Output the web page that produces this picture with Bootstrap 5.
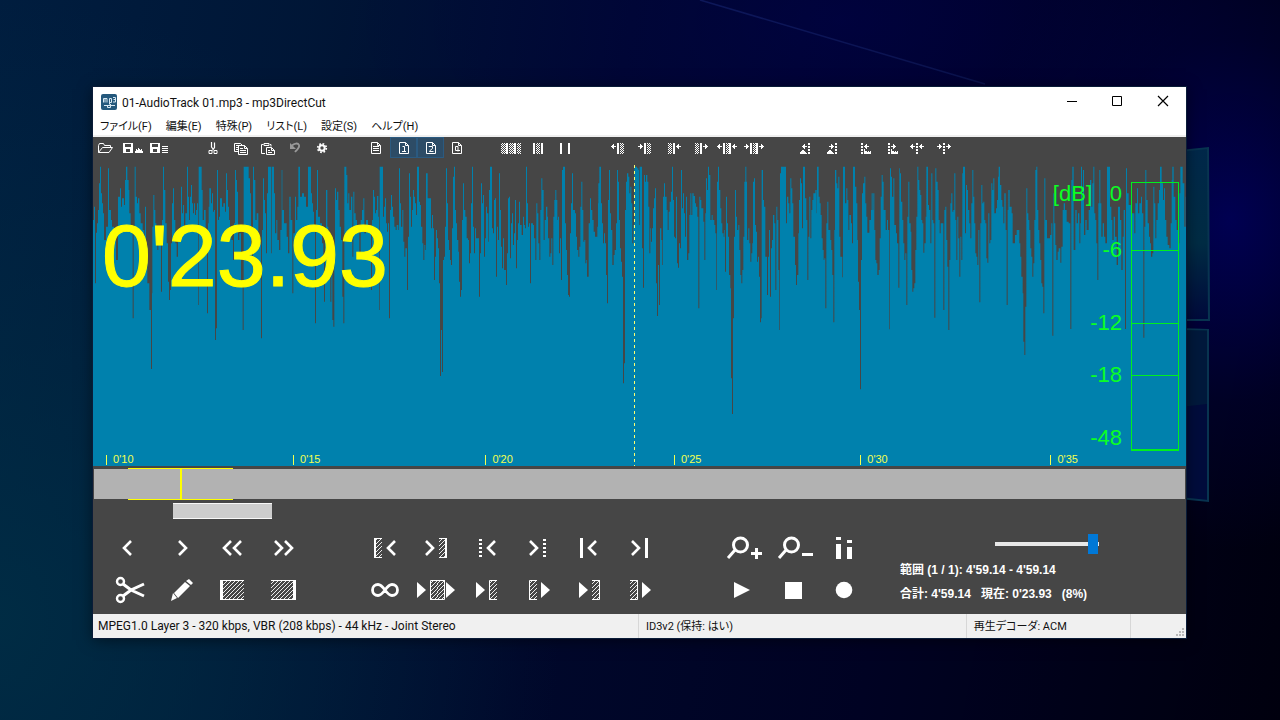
<!DOCTYPE html>
<html lang="ja">
<head>
<meta charset="utf-8">
<meta name="viewport" content="width=device-width, initial-scale=1">
<title>01-AudioTrack 01.mp3 - mp3DirectCut</title>
<link href="https://cdn.jsdelivr.net/npm/bootstrap@5.3.0/dist/css/bootstrap.min.css" rel="stylesheet">
<style>
body{font-family:Roboto,"Noto Sans CJK JP",sans-serif;font-size:12px;line-height:16px;color:#111;background:#000a2a}
.desktop{padding:87px 94px 82px 93px;overflow:hidden;
 background:
 radial-gradient(ellipse 260px 330px at 1230px 220px,rgba(0,0,92,.85),rgba(0,0,70,.35) 55%,transparent),
 radial-gradient(ellipse 500px 260px at 840px 20px,rgba(0,0,84,.5),transparent),
 radial-gradient(ellipse 560px 620px at 0 620px,rgba(0,48,70,.8),transparent),
 linear-gradient(100deg,rgba(0,32,66,.9) 0,rgba(0,28,62,.75) 22%,rgba(0,12,54,.5) 45%,rgba(0,0,38,.5) 70%,#00000e 100%),#000420}
.scenery{inset:0;width:100%;height:100%}
.app-window{box-shadow:0 0 0 1px #0a1c38,0 2px 14px rgba(0,0,0,.5);background:#464646}
.title-bar{height:30px;background:#fff;padding-left:8px}
.title-bar .title-text{padding:1px 0 0 5px}
.title-bar .btn{width:46px;height:30px;border-radius:0}
.menu-bar{height:20px;background:#fff;border-bottom:2px solid #f0f0f0;font-feature-settings:"palt";font-size:11px;line-height:20px}
.menu-bar a{color:#111;text-decoration:none;padding:0 7px}
.tool-strip{height:23px}
.tool-strip .btn{width:27px;height:21px}
.tool-strip .gap-cell{width:27px}
.tool-strip .btn.active{background:#2d4c66;box-shadow:inset 0 0 0 1px #2b5a80}
.btn svg,.title-bar svg{display:block}
.wave{min-height:200px}
.wave svg.peaks{inset:0;width:100%;height:100%}
.clock{left:9px;top:45px;font:88px/102px "Liberation Sans",sans-serif;color:#ff0;-webkit-text-stroke:1px #ff0}
.cursor-line{left:49.5%;top:5px;bottom:0;width:1px;background:repeating-linear-gradient(#ffff70 0 3px,transparent 3px 6px)}
.tick{bottom:0;font:11px/13px "Liberation Sans",sans-serif;color:#f4ff50}
.tick::before{content:"";display:inline-block;width:1px;height:10px;background:#f4ff50;margin-right:6px;vertical-align:-2px}
.meter{top:22px;bottom:15px;right:7px;width:48px;border:1px solid #00f01e;border-bottom-width:2px}
.meter div+div{border-top:1px solid #00f01e}
.db{right:64px;font:22px/24px "Liberation Sans",sans-serif;color:#0bff24;transform:translateY(-50%)}
.db-unit{right:94px}
.overview{height:30px;background:#b2b2b2;margin:3px 1px 0}
.view-range{left:3.1%;width:9.6%;top:-1px;bottom:-1px;border:solid #ff0;border-width:1px 0}
.view-pos{left:7.9%;width:2px;top:-1px;bottom:-1px;background:#ff0}
.scroll-track{height:20px;padding-top:4px}
.scroll-thumb{width:99px;height:16px;margin-left:80px;background:#cdcdcd;border:solid #f8f8f8;border-width:1px 0}
.deck{padding:8px 0 3px 12px}
.deck-grid{display:grid;grid-template-columns:repeat(15,51px)}
.deck-grid .btn{width:51px;height:42px}
.info{font:bold 12px/16px "Liberation Sans","Noto Sans CJK JP",sans-serif;color:#fff;padding:7px 0 0 30px;white-space:nowrap}
.volume{appearance:none;display:block;width:104px;height:20px;margin-left:95px;background:linear-gradient(#e8e8e8,#e8e8e8) center/100% 4px no-repeat}
.volume::-webkit-slider-thumb{appearance:none;width:10px;height:20px;background:#0078d7}
.info p{margin:0}
.status{background:#f0f0f0;height:24px;line-height:25px}
.status div{border-right:1px solid #d7d7d7;white-space:nowrap;font-feature-settings:"palt"}
.status .ja{font-size:11px}
.status div:last-of-type{border:0}
</style>
</head>
<body>
<svg width="0" height="0" class="position-absolute" aria-hidden="true">
<defs>
<pattern id="dots" width="2" height="2" patternUnits="userSpaceOnUse"><path d="M0 0h1v1h-1zM1 1h1v1h-1z" fill="#fff"/></pattern>
<pattern id="hatch" width="4" height="4" patternUnits="userSpaceOnUse"><path d="M-1 5L5 -1M-1 1L1 -1M3 5L5 3" stroke="#fff" stroke-width=".9"/></pattern>
<symbol id="al" viewBox="0 0 5 5"><path d="M0 2h1v-1h1v-1h1v2h2v1h-2v2h-1v-1h-1v-1h-1z" fill="#fff"/></symbol>
<symbol id="ar" viewBox="0 0 5 5"><path d="M5 2h-1v-1h-1v-1h-1v2h-2v1h2v2h1v-1h1v-1h1z" fill="#fff"/></symbol>
<symbol id="lt" viewBox="0 0 10 16"><path d="M9 1L2 8l7 7" fill="none" stroke="#fff" stroke-width="2.6"/></symbol>
<symbol id="gt" viewBox="0 0 10 16"><path d="M1 1l7 7-7 7" fill="none" stroke="#fff" stroke-width="2.6"/></symbol>
<symbol id="tri" viewBox="0 0 9 16"><path d="M0 0l9 8-9 8z" fill="#fff"/></symbol>
<symbol id="openl" viewBox="0 0 8 20"><path d="M0 0h8v20h-8z" fill="url(#hatch)"/><path d="M8 .5H.5V19.500H8" fill="none" stroke="#fff"/></symbol>
<symbol id="openr" viewBox="0 0 8 20"><path d="M0 0h8v20h-8z" fill="url(#hatch)"/><path d="M0 .5h7.500v19H0" fill="none" stroke="#fff"/></symbol>
<symbol id="page" viewBox="0 0 10 12"><path d="M.5 .5h6l3 3v8h-9zM6.500 .5v3h3" fill="none" stroke="#fff"/></symbol>
<symbol id="floppy" viewBox="0 0 10 10"><path d="M0 0h10v10h-10zM2 1v3h6v-3zM3 6v3h4v-3z" fill="#fff" fill-rule="evenodd"/></symbol>
</defs>
</svg>

<main class="desktop position-relative min-vh-100 d-flex">
<svg class="scenery position-absolute" viewBox="0 0 1280 720" preserveAspectRatio="none" aria-hidden="true">
 <defs>
 <linearGradient id="pa" x1="0" y1="0" x2="0" y2="1"><stop offset="0" stop-color="#00284a"/><stop offset=".55" stop-color="#002c44"/><stop offset="1" stop-color="#000a3c"/></linearGradient>
 <linearGradient id="beam" x1="0" y1="0" x2="1" y2="0"><stop offset="0" stop-color="#1a2a7a" stop-opacity=".5"/><stop offset="1" stop-color="#1a2a70" stop-opacity=".4"/></linearGradient>
 </defs>
 <path d="M700 0L985 84" stroke="url(#beam)" stroke-width="1.500"/>
 <path d="M1180 151l28-3 1 172h-29z" fill="url(#pa)" stroke="#083450" stroke-width="2"/>
 <path d="M1180 329l28 1v171l-28-3z" fill="#000c3c" stroke="#083450" stroke-width="2"/>
 <path d="M1180 330h27v74l-27 3z" fill="#00203c" opacity=".7"/>
</svg>

<section class="app-window position-relative flex-grow-1 d-flex flex-column">
 <header class="title-bar d-flex align-items-center">
  <svg width="16" height="16" viewBox="0 0 16 16"><rect width="16" height="16" rx="2" fill="#24587c"/><path d="M2.500 8.500v-4h1.500v4M4 4.500h2v4M8.500 10.500v-6h2v4h-2M12 3.500h2.500v4.500H12M12.500 5.500h2M3 11.500h11M9.500 10v3.500H6.500v-2" fill="none" stroke="#d8e8f2"/></svg>
  <span class="title-text flex-grow-1">01-AudioTrack 01.mp3 - mp3DirectCut</span>
  <button class="btn p-0 border-0" aria-label="最小化"><svg width="46" height="30"><path d="M19 14.500h10" stroke="#000"/></svg></button>
  <button class="btn p-0 border-0" aria-label="最大化"><svg width="46" height="30"><path d="M18.500 9.500h9v9h-9z" fill="none" stroke="#000"/></svg></button>
  <button class="btn p-0 border-0" aria-label="閉じる"><svg width="46" height="30"><path d="M18 9l10 10M28 9l-10 10" stroke="#000" stroke-width="1.200"/></svg></button>
 </header>
 <nav class="menu-bar d-flex">
  <a href="#">ファイル(F)</a><a href="#">編集(E)</a><a href="#">特殊(P)</a><a href="#">リスト(L)</a><a href="#">設定(S)</a><a href="#">ヘルプ(H)</a>
 </nav>
 <div class="tool-strip d-flex" role="toolbar" id="tools"></div>

 <div class="wave position-relative flex-grow-1">
  <svg class="peaks position-absolute" viewBox="0 0 3279 918" preserveAspectRatio="none" aria-hidden="true"><path id="peaks" fill="#0081ad"/></svg>
  <div class="cursor-line position-absolute"></div>
  <div class="clock position-absolute">0'23.93</div>
  <span class="tick position-absolute" style="left:1.2%">0'10</span>
  <span class="tick position-absolute" style="left:18.3%">0'15</span>
  <span class="tick position-absolute" style="left:35.9%">0'20</span>
  <span class="tick position-absolute" style="left:53.150%">0'25</span>
  <span class="tick position-absolute" style="left:70.2%">0'30</span>
  <span class="tick position-absolute" style="left:87.6%">0'35</span>
  <span class="db db-unit position-absolute" style="top:11.2%">[dB]</span>
  <span class="db position-absolute" style="top:11.2%">0</span>
  <span class="db position-absolute" style="top:29.5%">-6</span>
  <span class="db position-absolute" style="top:53.4%">-12</span>
  <span class="db position-absolute" style="top:70.4%">-18</span>
  <span class="db position-absolute" style="top:91%">-48</span>
  <div class="meter position-absolute d-flex flex-column"><div style="flex:68 0 0"></div><div style="flex:73 0 0"></div><div style="flex:51 0 0"></div><div style="flex:74 0 0"></div></div>
 </div>

 <div class="overview position-relative"><div class="view-range position-absolute"></div><div class="view-pos position-absolute"></div></div>
 <div class="scroll-track"><div class="scroll-thumb"></div></div>

 <div class="deck d-flex">
  <div class="deck-grid" id="deck"></div>
  <div class="info">
   <input class="volume" type="range" min="0" max="100" value="99" aria-label="音量">
   <p class="mt-2">範囲 (1 / 1): 4'59.14 - 4'59.14</p>
   <p class="mt-2" style="white-space:pre">合計: 4'59.14   現在: 0'23.93   (8%)</p>
  </div>
 </div>

 <footer class="status d-flex position-relative">
  <div style="width:49.950%;padding-left:5px">MPEG1.0 Layer 3 - 320 kbps, VBR (208 kbps) - 44 kHz - Joint Stereo</div>
  <div class="ja" style="width:30%;padding-left:7px">ID3v2 (保持: はい)</div>
  <div class="ja" style="width:15%;padding-left:7px">再生デコーダ: ACM</div>
  <div class="flex-grow-1"></div>
  <svg class="position-absolute bottom-0 end-0" width="12" height="12" aria-hidden="true"><path d="M8 2h2v2h-2zM5 5h2v2h-2zM8 5h2v2h-2zM2 8h2v2h-2zM5 8h2v2h-2zM8 8h2v2h-2z" fill="#b8b8b8"/></svg>
 </footer>
</section>
</main>

<script src="https://cdn.jsdelivr.net/npm/bootstrap@5.3.0/dist/js/bootstrap.bundle.min.js"></script>
<script>
// Small drawing helpers shared by the toolbar and the transport icons
const bar = (x, y = 6, h = 11, w = 2) => `<rect x="${x}" y="${y}" width="${w}" height="${h}" fill="#fff"/>`;
const dots = (x, w) => `<rect x="${x}" y="6" width="${w}" height="11" fill="url(#dots)" shape-rendering="crispEdges"/>`;
const use = (id, x, y, w, h) => `<use href="#${id}" x="${x}" y="${y}" width="${w}" height="${h}"/>`;
const arrow = (id, x) => use(id, x, 7, 5, 5);
const dotBar = x => [6, 9, 12, 15].map(y => bar(x, y, 2)).join('');
const line = (d, c = '#fff', w = 1) => `<path d="${d}" fill="none" stroke="${c}" stroke-width="${w}"/>`;
const solid = (d, c = '#fff') => `<path d="${d}" fill="${c}" fill-rule="evenodd"/>`;
const hillL = solid('M5 17v-2h1v-1h1v-1h2v1h1v1h1v1h1v1z');
const hillR = solid('M15 17v-5h1v2h2v1h1v-1h1v1h1v-1h1v3z');

const tools = [
 ['開く', line('M5.5 15.500V8.500l1-2h4l1 2h6v2M5.500 15.500l4-5h10l-3.500 5z')],
 ['保存', use('floppy',3,6,10,10) + solid('M15 16v-2h1v-2h1v1h1v-2h1v1h1v1h1v-1h1v2h1v2z')],
 ['名前を付けて保存', use('floppy',3,6,10,10) + line('M15 9.500h6M15 11.500h6M15 13.500h6M15 15.500h6')],
 null,
 ['切り取り', line('M10.500 5v5l2 2.500M13.500 5.500v5l-2 3','#fff',1.200) + line('M8 13.500h3v3h-3zM13 13.500h3v3h-3z')],
 ['コピー', line('M10 14.500H6.500V6.500h6l2 2M8 8.500h3M8 10.500h2M8 12.500h2M10.500 8.500h6l3 3v6h-9zM16.500 8.500v3h3M12 11.500h3M12 13.500h6M12 15.500h6')],
 ['貼り付け', line('M10 16.500H6.500v-9h2M15 7.500h1v2M9 6.500h5v2H9zM11.500 10.500h5l3 3v4h-8zM16.500 10.500v3h3M13 13.500h2M13 15.500h4')],
 ['元に戻す', line('M10 8.500c2-2 6-3 7-.5c1 2.500-1.500 4-4 7','#999',1.800) + solid('M8 6v6h6z','#999')],
 ['設定', `<circle cx="13" cy="11" r="2.700" fill="none" stroke="#fff" stroke-width="2"/><circle cx="13" cy="11" r="4.300" fill="none" stroke="#fff" stroke-width="1.700" stroke-dasharray="1.700 1.680"/>`],
 null,
 ['文書', use('page',8,5,10,12) + line('M10 9.500h6M10 11.500h6M10 13.500h6')],
 ['ページ 1', use('page',9,5,10,12) + line('M12.500 9.500h2v5M12 14.500h4'), 1],
 ['ページ 2', use('page',9,5,10,12) + line('M12 10v-.5h3.500v2l-3 2.500v.5h4'), 1],
 ['ページ a', use('page',8,5,10,12) + line('M14 14.500v-5h-2.500v4h4.500')],
 null,
 ['範囲 1', dots(3,5)+bar(8)+dots(11,5)+bar(16)+dots(19,4)],
 ['範囲 2', bar(8)+dots(11,4)+bar(16)],
 ['範囲 3', bar(8)+bar(16)],
 null,
 ['始点を左へ', arrow('al',5)+bar(11)+dots(14,4)],
 ['始点を右へ', arrow('ar',5)+bar(11)+dots(14,4)],
 ['終点を左へ', dots(8,4)+bar(13)+arrow('al',16)],
 ['終点を右へ', dots(8,4)+bar(13)+arrow('ar',16)],
 ['範囲を左へ', arrow('al',3)+bar(9)+dots(12,3)+bar(15)+arrow('al',18)],
 ['範囲を右へ', arrow('ar',3)+bar(9)+dots(12,3)+bar(15)+arrow('ar',18)],
 null,
 ['前を検出', arrow('al',7)+dotBar(13)+hillL],
 ['後を検出', arrow('ar',7)+dotBar(13)+hillL],
 ['前の無音', dotBar(12)+arrow('al',15)+hillR],
 ['後の無音', dotBar(12)+arrow('ar',15)+hillR],
 ['境界を左へ', arrow('al',7)+dotBar(13)+arrow('al',16)],
 ['境界を右へ', arrow('ar',7)+dotBar(13)+arrow('ar',16)]
];
document.getElementById('tools').innerHTML = tools.map(t => t
 ? `<button class="btn p-0 border-0 rounded-0${t[2] ? ' active' : ''}" aria-label="${t[0]}"><svg width="27" height="21">${t[1]}</svg></button>`
 : '<span class="gap-cell"></span>').join('');

const lt = x => use('lt', x, 13, 10, 16), gt = x => use('gt', x, 13, 10, 16), tri = x => use('tri', x, 13, 9, 16);
const ol = x => use('openl', x, 11, 8, 20), or = x => use('openr', x, 11, 8, 20);
const dashes = x => [0,1,2,3,4].map(i => bar(x, 12 + i * 4, 2, 3)).join('');
const lens = '<circle cx="23.500" cy="18" r="7" fill="none" stroke="#fff" stroke-width="3"/><path d="M18 23l-7 8" stroke="#fff" stroke-width="3"/>';
const hatchBox = '<rect x="13" y="11" width="24" height="20" fill="url(#hatch)"/>';
const deck = [
 ['戻る', lt(17)], ['進む', gt(22)], ['大きく戻る', lt(15)+lt(25)], ['大きく進む', gt(16)+gt(26)], null,
 ['始点へ', ol(14)+bar(14,11,20)+lt(26)], ['終点へ', gt(14)+or(28)+bar(34,11,20)], ['前の境界', dashes(17)+lt(24)], ['次の境界', gt(16)+dashes(30)],
 ['先頭', bar(16,11,20,3)+lt(23)], ['末尾', gt(16)+bar(30,11,20,3)], null,
 ['拡大', lens+line('M34 26.500h11M39.500 21v11','#fff',3)], ['縮小', lens+line('M34 27.500h11','#fff',3)],
 ['レベル', solid('M17 10h5v3h-5zM17 17h5v15h-5zM28 13h5v3h-5zM28 20h5v12h-5z')],
 ['カット', '<circle cx="15.500" cy="12.500" r="3.500" fill="none" stroke="#fff" stroke-width="2.400"/><circle cx="15.500" cy="29.500" r="3.500" fill="none" stroke="#fff" stroke-width="2.400"/>'+line('M18 15l8 6 13 6M18 27l8-6 13-6','#fff',3)],
 ['編集', solid('M15 32l2-8 4 5zM18 24L29 13l5 4L22 29zM30 12l3-2 4 4-2 2z')],
 ['始点を設定', hatchBox+bar(13,11,20,3)+line('M13 11.500h24M13 30.500h24')],
 ['終点を設定', hatchBox+bar(35,11,20,3)+line('M13 11.500h25M13 30.500h25')], null,
 ['ループ', line('M25 21C22.500 17.500 21 15.500 18 15.500a5.500 5.500 0 0 0 0 11C21 26.500 22.500 24.500 25 21S29 15.500 32 15.500a5.500 5.500 0 0 1 0 11C29 26.500 27.500 24.500 25 21z','#fff',2.800)],
 ['範囲を再生', tri(6)+ol(19)+or(26)+tri(35)],
 ['始点まで再生', tri(14)+ol(27)], ['始点から再生', ol(16)+tri(28)],
 ['終点まで再生', tri(15)+or(28)], ['終点から再生', or(15)+tri(27)], null,
 ['再生', solid('M17 13l16 8-16 8z')], ['停止', bar(17,13,17,17)], ['録音', '<circle cx="25" cy="21" r="8.300" fill="#fff"/>']
];
document.getElementById('deck').innerHTML = deck.map(t => t
 ? `<button class="btn p-0 border-0" aria-label="${t[0]}"><svg width="51" height="42">${t[1]}</svg></button>` : '<span></span>').join('');

// Peak levels: [horizontal origin, "x level x level ..."], each level holding until the next x
const peakData = [
[-9,"9 180 12 140 15 370 18 218 21 190 24 150 27 70 30 20 33 100 36 130 39 160 42 240 48 200 54 25 57 150 63 180 66 200 72 240 78 300 84 110 90 85 93 140 96 115 102 135 105 60 108 20 112 60 116 90 118 160 122 200 128 475 131 220 134 20 137 110 141 130 144 115 148 160 152 190 158 210 163 235 165 140 168 260 172 370 178 450 183 627 186 400 187 200 190 105 193 150 196 190 199 240 202 270 205 240 210 200 213 395 216 180 219 20 222 90 226 190 230 250 234 365 237 420 240 390 243 250 246 130 249 85 252 180 256 250 260 290 264 240 270 200 273 80 276 160 279 135 282 200 286 160 291 20 294 110 297 180 300 110 303 75 306 130 309 160 312 130 315 165 318 150 321 130 324 435 326 20 335 90 338 180 342 150 347 240 351 460 354 190 356 140 358 85 363 130 366 100 369 155 372 150 375 540 378 505 381 30 384 180 387 170 390 115 396 140 400 130 405 155 408 40 411 90 414 140 417 180 420 200 424 240 429 300 432 190 435 30 438 60 441 95 444 240 448 220 453 370 458 510 461 20 476 55 480 100 483 260 486 320 489 20 492 60 496 180 500 160 505 230 510 250 513 535 516 210 519 55 522 120 525 160 528 280 531 100 534 20 543 280 545 20 552 100 555 220 559 180 562 240 567 270 571 210 575 30 577 150 582 190 590 230 594 280 598 110 602 180 607 400 610 220 615 110 618 180 622 140 625 20 630 110 636 100 642 110 648 140 654 20 663 100 666 130 669 155 672 200 675 490 678 150 681 30 684 170 690 190 696 250 700 290 702 425 705 240 708 90 712 200 715 240 718 300 721 425 724 250 727 480 730 500 733 300 735 85 738 120 741 95 745 150 749 200 753 240 757 410 760 490 763 20 769 45 772 130 775 100 778 150 783 110 787 290 790 95 793 160 797 180 801 200 808 280 812 180 816 150 820 115 823 220 828 180 834 200"],
[816,"18 390 21 180 24 90 27 110 30 160 33 150 36 108 40 170 42 450 44 20 54 170 57 140 60 115 63 190 66 215 69 190 72 475 75 150 78 105 81 140 84 170 88 200 92 210 95 195 100 210 102 25 105 130 108 200 112 150 115 245 118 290 121 265 126 390 129 230 132 40 135 110 138 200 141 150 144 90 147 110 150 130 153 165 156 20 162 125 165 135 168 200 172 250 175 300 178 255 181 270 183 40 188 115 198 205 201 165 204 205 207 360 210 290 213 210 216 235 219 265 222 370 225 648 228 510 231 636 234 300 237 290 240 200 243 25 246 130 249 240 252 270 255 300 258 315 261 205 264 50 267 20 270 150 273 190 276 240 280 275 282 365 285 410 288 390 291 180 294 70 297 150 301 170 305 235 309 240 312 310 315 280 318 130 321 20 324 200 327 280 330 205 333 235 342 410 345 280 348 70 351 130 354 105 357 290 360 235 363 140 366 160 370 245 372 90 375 20 381 205 384 220 387 120 390 115 393 350 396 200 399 240 402 40 405 150 408 260 411 325 414 235 417 330 423 375 426 280 429 115 432 110 435 295 438 190 441 160 444 255 447 220 450 120 453 325 456 240 459 190 462 125 465 195 470 225 474 170 477 195 480 205 483 20 486 130 489 200 492 190 495 370 498 190 504 195 507 235 511 300 514 130 517 160 520 250 523 300 526 150 529 55 532 90 536 240 539 180 543 140 547 170 549 235 553 290 556 280 559 235 562 315 565 170 568 120 571 90 574 120 577 180 579 170 582 280 585 235 588 360 591 30 594 20 600 190 603 270 606 345 609 405 612 410 615 220 618 130 621 40 624 150 630 160 633 230 636 270 640 290 643 260 646 140 649 65 652 150 655 245 658 240 661 310 664 300 666 350 671 190 675 115 678 150 682 180 686 215 690 230 697 200 699 130 700 70 703 20 708 130 711 190 714 250 717 220 720 250 723 345 726 430 729 120 732 30 735 160 738 210 742 315 746 285 749 270 753 190 756 30 759 65 762 180 765 265 768 305 771 350 774 670 777 610 780 150 783 65 786 40 790 50 793 100 796 80 799 130 802 250 805 195 808 20"],
[1626,"0 20 6 25 10 30 12 195 14 20 21 265 24 383 27 45 30 65 33 45 37 65 40 140 43 280 46 205 48 245 51 205 54 145 57 115 60 85 63 370 66 468 69 315 72 435 75 205 79 240 82 315 84 110 87 70 90 110 95 150 98 210 101 155 104 125 108 95 111 20 114 120 117 230 120 235 123 110 126 310 129 323 132 250 135 265 138 30 141 145 144 100 147 160 150 230 153 110 156 300 160 280 163 165 166 100 169 165 172 100 176 108 180 130 183 140 187 170 190 445 193 110 196 120 199 145 205 185 208 300 211 160 213 55 216 90 219 20 222 45 226 180 230 165 233 180 238 195 241 220 244 390 246 65 249 20 252 90 256 145 259 190 262 220 266 230 268 210 270 335 273 110 276 190 279 230 282 345 286 385 288 655 291 762 294 475 297 230 300 90 303 170 306 210 310 195 313 270 316 345 319 370 322 330 325 230 328 65 331 20 334 65 336 240 340 205 343 250 346 305 349 280 352 250 354 65 357 55 360 195 363 215 366 305 369 290 372 350 375 487 378 475 380 30 384 120 387 140 391 290 396 405 399 290 402 210 405 410 408 265 411 240 414 165 418 190 421 390 424 140 427 180 430 330 433 510 435 40 438 20 453 190 456 110 460 130 463 160 466 55 469 85 472 130 475 230 480 315 483 375 486 345 490 220 492 120 495 55 498 70 501 205 504 20 510 115 514 180 517 360 520 230 523 110 526 235 529 150 532 120 535 100 541 90 545 160 546 20 551 110 554 130 557 165 560 235 563 270 566 300 568 295 571 445 574 190 577 125 580 210 586 240 589 270 592 345 595 487 598 210 600 30 604 70 607 85 610 50 613 230 616 290 622 352 624 20 630 130 634 85 637 120 640 210 643 165 648 190 651 250 654 20 660 80 664 130 667 240 669 365 672 450 675 688 678 300 681 100 684 70 688 50 691 130 694 170 697 218 703 180 708 150 710 100 713 150 715 100 718 210 721 300 724 310 727 345 731 330 734 235 737 110 740 45 743 65 746 150 752 210 756 180 759 210 763 508 765 25 768 50 771 110 775 55 778 195 783 220 786 250 790 383 793 25"],
[2421,"0 40 3 125 7 180 10 250 13 300 16 280 19 435 22 170 25 65 28 190 32 215 34 330 37 395 40 385 43 370 46 270 49 170 52 20 55 60 58 90 61 105 64 180 67 190 70 278 73 250 77 170 79 20 84 135 87 150 91 250 94 40 97 180 100 190 103 473 106 25 109 65 113 90 116 180 119 220 122 190 130 450 133 150 136 140 139 240 142 320 145 510 148 300 151 130 154 100 157 155 160 150 163 40 166 180 169 300 172 170 175 235 178 350 181 230 184 300 187 40 189 20 195 220 198 75 201 90 204 150 208 190 211 235 214 130 217 30 220 110 223 190 226 280 229 290 232 315 235 210 238 427 241 190 244 75 247 130 250 125 253 180 256 190 259 295 262 308 265 160 268 250 271 240 274 70 277 90 280 55 283 160 288 145 291 120 294 50 296 20 300 75 304 120 307 140 310 190 313 100 317 210 320 435 323 150 325 90 329 140 335 160 338 250 345 225 350 210 358 250 361 290 364 350 368 400 370 545 373 585 376 440 379 85 382 160 385 180 388 210 391 265 394 290 397 350 400 310 403 180 406 30 409 20 412 150 415 210 418 250 421 300 424 370 427 380 430 460 433 55 436 180 441 235 450 225 454 190 457 527 460 100 463 190 466 255 469 300 473 275 476 265 481 308 484 260 488 150 491 130 495 150 500 185 506 190 511 507 514 60 517 20 521 270 526 150 530 190 534 160 538 250 541 190 543 20 546 120 549 30 552 225 556 180 560 210 566 150 570 60 574 140 577 70 580 20 583 160 586 180 589 250 592 360 595 130 598 30 601 130 604 230 608 190 612 230 616 250 621 20 630 140 634 180 637 240 641 170 645 230 650 315 654 140 660 180 664 330 668 230 671 150 675 507 678 25 681 100 686 135 694 160 703 220 706 130 711 85 714 160 718 130 723 110 726 160 730 533 733 200 736 30 739 120 743 190 747 230 750 250 753 290 757 280 760 80 763 130 766 235 769 180 773 130 777 90 780 20 785 70 789 120 792 85 795 180 799 230 803 255 808 265 812 190 815 60 817 20 821 110 826 180 830 210 835 250 838 100 841 20 848 70 853 200 857 110"]];
let d = 'M0 918';
for (const [origin, list] of peakData) {
 const n = list.split(' ').map(Number);
 for (let i = 0; i < n.length; i += 2) d += `H${n[i] + origin}V${n[i + 1]}`;
}
document.getElementById('peaks').setAttribute('d', d + 'H3279V918Z');
</script>
</body>
</html>
